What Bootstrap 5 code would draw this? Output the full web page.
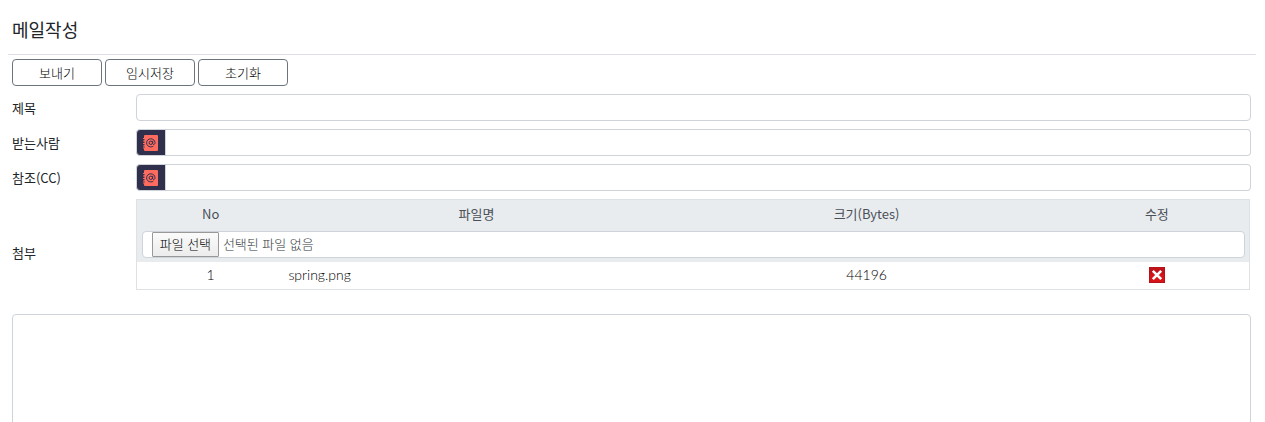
<!DOCTYPE html>
<html lang="ko">
<head>
<meta charset="utf-8">
<meta name="viewport" content="width=device-width, initial-scale=1">
<title>메일작성</title>
<link rel="stylesheet" href="https://cdn.jsdelivr.net/npm/bootstrap@5.3.0/dist/css/bootstrap.min.css">
<style>
  body { font: 400 13px/20px Lato, "Noto Sans CJK KR", sans-serif; color: #212529; background: #fff; }
  .mail-page { padding: 0 9px 0 8px; }
  .mail-title { font: 400 18px/24px "Noto Sans CJK KR", sans-serif; padding: 17px 4px 13px; border-bottom: 1px solid #dcdde6; }
  .mail-form { padding: 4px 5px 0 4px; }
  .mail-tools { gap: 3px; margin-bottom: 8px; }
  .mail-tools .btn { width: 90px; height: 27px; padding: 0; font-size: 13px; font-weight: 300; line-height: 20px; color: #000; background: #fff; border: 1px solid #6c757d; border-radius: 4px; }
  .mail-row { margin-bottom: 8px; }
  .mail-label { flex: 0 0 10%; font: 400 13px/20px "Noto Sans CJK KR", sans-serif; }
  .mail-row .form-control { height: 27px; min-height: 27px; padding: 2px 8px; font-size: 13px; border-color: #ced4da; border-radius: 4px; }
  .mail-row .input-group .form-control { border-left: 0; }
  .book-btn { width: 30px; height: 27px; padding: 0; background: #30304d; border: 1px solid #ced4da; border-radius: 4px; }
  .book-btn svg { display: block; margin: auto; }
  .file-table { table-layout: fixed; border: 1px solid #dee2e6; color: #212529; margin-right: 1px; }
  .file-table th { height: 31px; padding: 0 4px 2px; font: 400 13px/20px "Noto Sans CJK KR", sans-serif; color: #495057; background: #e9ecef; text-align: center; }
  .file-table .pick-cell { padding: 0 4px 4px 5px; background: #e9ecef; }
  .file-table tbody td { height: 28px; padding: 0 4px; font-size: 14px; font-weight: 300; line-height: 20px; color: #000; }
  .file-box { display: flex; align-items: center; gap: 4px; height: 27px; padding: 0 9px; background: #fff; border: 1px solid #ced4da; border-radius: 4px; font-size: 13px; font-weight: 300; line-height: 20px; color: #343a40; position: relative; }
  .pick-btn { width: 67px; height: 25px; padding: 0; font-size: 13px; font-weight: 300; line-height: 20px; color: #000; background: linear-gradient(#fbfbfb, #ececec); border: 1px solid #999; border-radius: 1px; }
  .mail-body { display: block; height: 320px; margin-top: 24px; border-color: #ced4da; border-radius: 4px; resize: none; }
</style>
</head>
<body>
<main class="mail-page vh-100 overflow-hidden">
  <h1 class="mail-title mb-0">메일작성</h1>
  <form class="mail-form">
    <div class="mail-tools d-flex">
      <button type="button" class="btn">보내기</button>
      <button type="button" class="btn">임시저장</button>
      <button type="reset" class="btn">초기화</button>
    </div>
    <div class="mail-row d-flex align-items-center">
      <label class="mail-label" for="subject">제목</label>
      <input id="subject" type="text" class="form-control flex-fill w-auto">
    </div>
    <div class="mail-row d-flex align-items-center">
      <label class="mail-label" for="to">받는사람</label>
      <div class="input-group flex-fill w-auto">
        <button type="button" class="btn book-btn" aria-label="주소록"><svg width="16" height="16" viewBox="0 0 16 16"><use href="#book"/></svg></button>
        <input id="to" type="text" class="form-control">
      </div>
    </div>
    <div class="mail-row d-flex align-items-center">
      <label class="mail-label" for="cc">참조(CC)</label>
      <div class="input-group flex-fill w-auto">
        <button type="button" class="btn book-btn" aria-label="주소록"><svg width="16" height="16" viewBox="0 0 16 16"><use href="#book"/></svg></button>
        <input id="cc" type="text" class="form-control">
      </div>
    </div>
    <div class="d-flex align-items-center">
      <label class="mail-label pt-3" for="attach">첨부</label>
      <table class="file-table flex-fill w-auto">
        <colgroup><col style="width:13.3%"><col style="width:34.5%"><col style="width:35.6%"><col style="width:16.6%"></colgroup>
        <thead>
          <tr><th scope="col">No</th><th scope="col">파일명</th><th scope="col">크기(Bytes)</th><th scope="col">수정</th></tr>
          <tr>
            <td colspan="4" class="pick-cell">
              <div class="file-box">
                <button type="button" class="pick-btn" onclick="document.getElementById('attach').click()">파일 선택</button>
                <span>선택된 파일 없음</span>
                <input id="attach" type="file" class="visually-hidden" tabindex="-1">
              </div>
            </td>
          </tr>
        </thead>
        <tbody>
          <tr>
            <td class="text-center">1</td>
            <td>spring.png</td>
            <td class="text-center">44196</td>
            <td class="text-center">
              <button type="button" class="btn p-0 border-0 d-block mx-auto" aria-label="삭제">
                <svg class="d-block" width="16" height="16" viewBox="0 0 16 16"><path fill="#b5121b" d="M0 0h16v16H0z"/><path fill="#d91418" d="M1 1h14v14H1z"/><path fill="#c01218" d="M1 1h14v6H1z"/><path stroke="#fff" stroke-width="2.6" d="M3.8 3.8l8.4 8.4M12.2 3.8l-8.4 8.4"/></svg>
              </button>
            </td>
          </tr>
        </tbody>
      </table>
    </div>
    <textarea class="mail-body form-control" aria-label="본문"></textarea>
  </form>
</main>
<svg class="d-none" aria-hidden="true">
  <symbol id="book" viewBox="0 0 16 16">
    <rect x="1" width="14" height="16" rx="1" fill="#ff6b5e"/>
    <path stroke="#ff6b5e" d="M0 3.5h2M0 6h2M0 8.500h2M0 11h2M0 13h2"/>
    <path stroke="#30304d" stroke-width=".6" d="M1 4.700h1M1 7.200h1M1 9.700h1M1 12h1"/>
    <circle cx="7.800" cy="7.800" r="1.700" fill="none" stroke="#30304d"/>
    <path fill="none" stroke="#30304d" d="M9.700 5.800v2.700c0 1.600 2.300 1.400 2.300-.7 0-2.300-1.800-4-4.200-4-2.400 0-4.200 1.700-4.200 4s1.800 4.100 4.200 4.100c1 0 1.800-.2 2.500-.7"/>
  </symbol>
</svg>
<script src="https://cdn.jsdelivr.net/npm/bootstrap@5.3.0/dist/js/bootstrap.bundle.min.js"></script>
</body>
</html>
